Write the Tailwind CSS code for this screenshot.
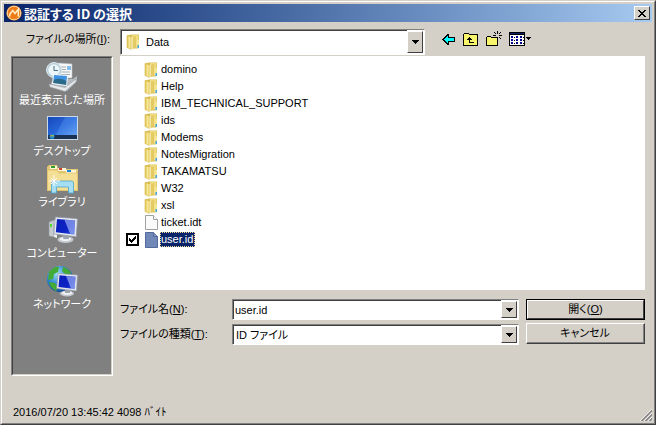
<!DOCTYPE html>
<html lang="ja">
<head>
<meta charset="utf-8">
<meta name="viewport" content="width=device-width, initial-scale=1">
<title>認証する ID の選択</title>
<script src="https://cdn.jsdelivr.net/npm/@tailwindcss/browser@4"></script>
</head>
<body class="min-h-screen bg-[#d4d0c8] text-black text-[11px] leading-[17px] font-['Liberation_Sans','Noto_Sans_CJK_JP',sans-serif] [font-feature-settings:'palt']">

<svg class="absolute size-0" aria-hidden="true">
  <defs>
    <linearGradient id="fold" x1="0" x2="1"><stop offset="0" stop-color="#dfc04a"/><stop offset=".6" stop-color="#f8ea9c"/><stop offset="1" stop-color="#e2c456"/></linearGradient>
    <linearGradient id="screen" x1="0" y1="0" x2="1" y2="1"><stop offset="0" stop-color="#0a1fb8"/><stop offset=".6" stop-color="#0c22c4"/><stop offset="1" stop-color="#2a50e0"/></linearGradient>
    <linearGradient id="desk" x1="0" y1="0" x2="1" y2="1"><stop offset="0" stop-color="#1548b8"/><stop offset=".5" stop-color="#2a68dc"/><stop offset="1" stop-color="#74b0f8"/></linearGradient>
    <radialGradient id="globe" cx=".4" cy=".3" r=".8"><stop offset="0" stop-color="#9fe0fa"/><stop offset=".5" stop-color="#2e86d0"/><stop offset="1" stop-color="#0c3a90"/></radialGradient>
    <symbol id="folder" viewBox="0 0 16 16">
      <path fill="#d8bd55" d="M1 1.500 5 .5h8v13l-1 1H5L1 13.500z"/>
      <path fill="#efdb80" d="M6 1h6.500v12H6z"/>
      <path fill="url(#fold)" stroke="#d6b84a" stroke-width=".6" d="M1 1.500 5.500 3v12.500L1 13.500z"/>
      <path fill="#fffbd8" d="M5.500 3h1.200v12.500H5.500z"/>
      <path fill="#e3ca62" d="M6.700 3 10 2v11.500l-3.300 1.500z"/>
      <path fill="#f4e595" d="M10.500 6h2.500v8h-2.500z"/>
      <path fill="#3fa4dc" d="M11.500 11h1.500v3h-1.500z"/>
    </symbol>
    <symbol id="down" viewBox="0 0 7 4"><path d="M0 0h7v1H6v1H5v1H4v1H3V3H2V2H1V1H0z"/></symbol>
    <symbol id="monitor" viewBox="0 0 22 24">
      <ellipse cx="11" cy="20.500" rx="7" ry="3" fill="#c4c8ce"/><ellipse cx="11" cy="20" rx="5" ry="1.800" fill="#f1f3f5"/>
      <path fill="#9da4ae" d="M9 16h5v4H9z"/>
      <path fill="#e6eaf0" stroke="#9098a6" stroke-width=".7" d="M2 .5 21.500 2 20.500 18 .7 15.500z"/>
      <path fill="url(#screen)" d="m3.500 2.300 16 1.400-.8 12.200-16.200-2z"/>
      <path fill="#b4c6fc" fill-opacity=".6" d="m10 2.900 9.500.8-.8 12.200-3.700-.5z"/>
    </symbol>
  </defs>
</svg>

<div class="flex min-h-screen flex-col border border-l-[#d4d0c8] border-t-[#d4d0c8] border-r-[#404040] border-b-[#404040]">
<div class="flex flex-1 flex-col border border-l-white border-t-white border-r-[#808080] border-b-[#808080] p-[2px]">

  <header class="flex h-[18px] items-center bg-linear-to-r from-[#0a246a] to-[#a6caf0] pr-[2px] pl-[2px]">
    <svg class="size-4 shrink-0" viewBox="0 0 16 16" aria-hidden="true"><circle cx="8" cy="8" r="7.600" fill="#f6a03c"/><circle cx="8" cy="8" r="6.700" fill="#ee7a18" stroke="#ffd9a0" stroke-width=".9"/><path d="M3.800 11.500V9l3-3.500L9 8.500l3.300-4.300v7.300" fill="none" stroke="#fff0c8" stroke-width="1.500"/></svg>
    <h1 class="ml-[2px] flex-1 font-['Noto_Sans_CJK_JP',sans-serif] text-[13px] font-bold text-white">認証する ID の選択</h1>
    <button type="button" aria-label="閉じる" class="flex h-[14px] w-4 items-center justify-center border border-t-white border-l-white border-r-[#404040] border-b-[#404040] bg-[#d4d0c8]">
      <svg class="h-[7px] w-2" viewBox="0 0 8 7" shape-rendering="crispEdges" aria-hidden="true"><path d="M0 0h2v1h1v1h2V1h1V0h2v1H7v1H6v1H5v1h1v1h1v1h1v1H6V6H5V5H3v1H2v1H0V6h1V5h1V4h1V3H2V2H1V1H0z"/></svg>
    </button>
  </header>

  <main class="flex flex-1 flex-col px-[7px] pt-[7px]">
    <div class="flex items-start">
      <label for="place" class="w-[109px] shrink-0 pt-[2px] pr-[10px] text-right">ファイルの場所(<u>I</u>):</label>
      <div class="relative flex h-[26px] w-[305px] border border-t-[#808080] border-l-[#808080] border-r-white border-b-white bg-white">
        <svg class="pointer-events-none absolute top-1 left-[5px] size-4" aria-hidden="true"><use href="#folder"/></svg>
        <select id="place" class="min-w-0 flex-1 appearance-none border-t border-l border-[#404040] bg-white pl-6 outline-none"><option>Data</option></select>
        <span class="pointer-events-none my-px mr-px flex w-4 items-center justify-center border border-t-white border-l-white border-r-[#404040] border-b-[#404040] bg-[#d4d0c8]"><svg class="h-1 w-[7px]" aria-hidden="true"><use href="#down"/></svg></span>
      </div>
      <div class="ml-[17px] flex items-center gap-[7px] pt-[2px]" role="toolbar" aria-label="ナビゲーション">
        <button type="button" aria-label="戻る"><svg class="h-4 w-[14px]" viewBox="0 0 14 16" shape-rendering="crispEdges" aria-hidden="true"><path d="M1 7h1V6h1V5h1V4h1V3h2v3h6v5H7v3H5v-1H4v-1H3v-1H2v-1H1V9H0V8h1z"/><path fill="#00ffff" d="M2 8h1V7h1V6h1V5h1v2h6v3H6v2H5v-1H4v-1H3V9H2z"/></svg></button>
        <button type="button" aria-label="上へ"><svg class="size-4" viewBox="0 0 16 16" shape-rendering="crispEdges" aria-hidden="true"><path d="M.5 14.500v-11l1-1h4l1 1h8v11z" fill="#f7f36a" stroke="#000"/><path d="M6 6h1v1h1v1h1v1H7v2h4v1H6V9H4V8h1V7h1z"/></svg></button>
        <button type="button" aria-label="新しいフォルダー"><svg class="size-4" viewBox="0 0 16 16" shape-rendering="crispEdges" aria-hidden="true"><path d="M.5 14.500v-8l1-1h3l1 1h6v8z" fill="#f7f36a" stroke="#000"/><path d="M11 0h1v3h-1zM11 6h1v3h-1zM7 4h3v1H7zM13 4h3v1h-3zM8 1h1v1H8zM9 2h1v1H9zM14 1h1v1h-1zM13 2h1v1h-1zM13 6h1v1h-1zM14 7h1v1h-1zM9 6h1v1H9z"/></svg></button>
        <button type="button" aria-label="表示"><svg class="h-4 w-[22px]" viewBox="0 0 22 16" shape-rendering="crispEdges" aria-hidden="true"><path d="M0 1h16v14H0z"/><path fill="#0a246a" d="M1 2h14v1H1z"/><path fill="#fff" d="M1 4h14v10H1z"/><path fill="#00008b" d="M2 5h2v2H2zM7 5h2v2H7zM11 5h2v2h-2zM2 8h2v2H2zM7 8h2v2H7zM11 8h2v2h-2zM2 11h2v2H2zM7 11h2v2H7zM11 11h2v2h-2z"/><path d="M5 6h1v1H5zM14 6h1v1h-1zM5 9h1v1H5zM14 9h1v1h-1zM5 12h1v1H5zM14 12h1v1h-1zM17 6h5v1h-1v1h-1v1h-1V8h-1V7h-1z"/></svg></button>
      </div>
    </div>

    <div class="mt-px flex gap-[7px]">
      <nav aria-label="場所" class="w-[102px] shrink-0 border border-t-[#808080] border-l-[#808080] border-r-white border-b-white">
        <div class="flex h-[318px] flex-col gap-[5px] border border-t-[#404040] border-l-[#404040] border-r-[#d4d0c8] border-b-[#d4d0c8] bg-[#808080] pt-[3px] leading-[14px] text-white">
          <a href="#recent" class="flex flex-col items-center whitespace-nowrap">
            <svg class="size-8" viewBox="0 0 32 32" aria-hidden="true"><path fill="#f6f8fa" stroke="#b8bec4" stroke-width=".6" d="m12 2 14 1v14H12z"/><path fill="#86bde8" d="M21 5h4v4h-4z"/><path stroke="#a4acb4" d="M14 6h6M14 8.500h6M14 11h10M14 13.500h10"/><circle cx="8" cy="9" r="7.500" fill="#b6cfda" stroke="#dce8ee"/><circle cx="8" cy="9" r="5.700" fill="#ecf5f8"/><path stroke="#4a6f86" fill="none" d="M8 5v4.500h4"/><path fill="#b6bbc0" d="m5 22 3-4h19l4-3v5L21 30 5 26z"/><path fill="#f5f9fd" d="m7 13 15 1-1 11-15-2z"/><path fill="#3e92e2" d="m8 14 13 1-.5 5L7.500 19z"/><path fill="#2b6b8a" d="M7.600 19q6-3 12.900 1l-.3 4L7 22z"/><path fill="#e7eaec" stroke="#969ca2" stroke-width=".6" d="m3 23 16 3.500L30 18v3l-11 9.500L4 26z"/></svg>
            最近表示した場所</a>
          <a href="#desktop" class="flex flex-col items-center whitespace-nowrap">
            <svg class="size-8" viewBox="0 0 32 32" aria-hidden="true"><path fill="#cbd8e8" d="M1 4h31v24H1z"/><path fill="url(#desk)" d="M2 5h29v22H2z"/><path fill="#5f9df0" fill-opacity=".35" d="M19 5h12v19H9z"/><path fill="#1b3154" d="M2 23h29v4H2z"/><circle cx="6" cy="24.500" r="2.500" fill="#1d87c9"/><path fill="#f28a35" d="M4.500 23H6v1.500H4.500z"/><path fill="#8edb55" d="M6.300 23h1.500v1.500H6.300z"/></svg>
            デスクトップ</a>
          <a href="#library" class="flex flex-col items-center whitespace-nowrap">
            <svg class="size-8" viewBox="0 0 32 32" aria-hidden="true"><path fill="#e3c873" d="M1 4 3 2h8l1 3h7l1 1h12v22H1z"/><path fill="#fff7d7" d="M4 3h7v3H4zM12 5h8v3h-8zM20 7h10v3H20z"/><path fill="#2da32d" d="M5 3h4v2H5z"/><path fill="#d3402a" d="M13 5h3v2h-3z"/><path fill="#1686d8" d="M21 7h4v2h-4z"/><path fill="#f5df94" stroke="#d6b75e" stroke-width=".6" d="M1.500 7H11l2 3h18.500v17.500h-30z"/><path fill="#a6def4" stroke="#4ca5cf" stroke-width=".8" d="M5.500 30V20q0-2 2-2h18q2 0 2 2v10h-5v-6h-12v6z"/><path stroke="#fff" fill="none" d="M8 12v11M3 18h11M5 15l6 6M11 15l-6 6"/></svg>
            ライブラリ</a>
          <a href="#computer" class="flex flex-col items-center whitespace-nowrap">
            <svg class="size-8" viewBox="0 0 32 32" aria-hidden="true"><path fill="#c7cbcf" stroke="#91979d" stroke-width=".6" d="m3 8 5-2v17l-5-1z"/><path fill="#eff1f3" d="m8 6 3 1v17l-3-1z"/><path fill="#50dc2c" d="M4 10h2v3H4z"/><svg x="7" y="2" width="25" height="28"><use href="#monitor"/></svg></svg>
            コンピューター</a>
          <a href="#network" class="flex flex-col items-center whitespace-nowrap">
            <svg class="size-8" viewBox="0 0 32 32" aria-hidden="true"><circle cx="14" cy="14" r="13" fill="url(#globe)"/><path fill="#43ab35" d="M3 7q5-6 10-5l-1 5-4 2-1 5-5 1zM17 2q7 2 8 7l-5 1-4-4zM3 17l6 1 3 5-2 3Q4 23 3 17z"/><svg x="10" y="8" width="22" height="24"><use href="#monitor"/></svg></svg>
            ネットワーク</a>
        </div>
      </nav>

      <div class="flex min-w-0 flex-1 flex-col">
        <ul class="h-[234px] bg-white pt-[5px] pl-[6px]" aria-label="ファイル一覧">
          <li class="flex h-[17px] items-center pl-[18px]"><svg class="mr-[1px] size-4" aria-hidden="true"><use href="#folder"/></svg>domino</li>
          <li class="flex h-[17px] items-center pl-[18px]"><svg class="mr-[1px] size-4" aria-hidden="true"><use href="#folder"/></svg>Help</li>
          <li class="flex h-[17px] items-center pl-[18px]"><svg class="mr-[1px] size-4" aria-hidden="true"><use href="#folder"/></svg>IBM_TECHNICAL_SUPPORT</li>
          <li class="flex h-[17px] items-center pl-[18px]"><svg class="mr-[1px] size-4" aria-hidden="true"><use href="#folder"/></svg>ids</li>
          <li class="flex h-[17px] items-center pl-[18px]"><svg class="mr-[1px] size-4" aria-hidden="true"><use href="#folder"/></svg>Modems</li>
          <li class="flex h-[17px] items-center pl-[18px]"><svg class="mr-[1px] size-4" aria-hidden="true"><use href="#folder"/></svg>NotesMigration</li>
          <li class="flex h-[17px] items-center pl-[18px]"><svg class="mr-[1px] size-4" aria-hidden="true"><use href="#folder"/></svg>TAKAMATSU</li>
          <li class="flex h-[17px] items-center pl-[18px]"><svg class="mr-[1px] size-4" aria-hidden="true"><use href="#folder"/></svg>W32</li>
          <li class="flex h-[17px] items-center pl-[18px]"><svg class="mr-[1px] size-4" aria-hidden="true"><use href="#folder"/></svg>xsl</li>
          <li class="flex h-[17px] items-center pl-[18px]"><svg class="mr-[1px] size-4" viewBox="0 0 16 16" aria-hidden="true"><path d="M1.500.5h8l4 4v10h-12z" fill="#fafafa" stroke="#a0a0a0"/><path d="M9.500.5v4h4" fill="#fff" stroke="#a0a0a0"/></svg>ticket.idt</li>
          <li class="flex h-[17px] items-center">
            <span class="relative mr-[5px] size-[13px]">
              <input id="pick" type="checkbox" checked class="peer block size-[13px] appearance-none border-2 border-black bg-white">
              <svg class="pointer-events-none absolute top-[3px] left-[3px] hidden size-[7px] peer-checked:block" viewBox="0 0 7 7" shape-rendering="crispEdges" aria-hidden="true"><path d="M0 2h1v1h1v1h1V3h1V2h1V1h1V0h1v3H6v1H5v1H4v1H3v1H2V6H1V5H0z"/></svg>
            </span>
            <svg class="size-4" viewBox="0 0 16 16" aria-hidden="true"><path d="M1.500.5h8l4 4v11h-12z" fill="#7088b8" stroke="#53689c"/><path d="M9.500.5v4h4" fill="#8498c4" stroke="#53689c"/></svg>
            <label for="pick" class="h-[15px] border border-dotted border-[#f5db95] bg-[#0a246a] pr-px leading-[13px] text-white">user.id</label>
          </li>
        </ul>

        <div class="mt-[9px] flex gap-[7px]">
          <form class="flex min-w-0 flex-1 flex-col gap-1">
            <div class="flex items-center">
              <label for="name" class="w-28 shrink-0">ファイル名(<u>N</u>):</label>
              <div class="flex h-[21px] min-w-0 flex-1 border border-t-[#808080] border-l-[#808080] border-r-white border-b-white bg-white">
                <input id="name" type="text" value="user.id" class="min-w-0 flex-1 border-t border-l border-[#404040] bg-white pl-px outline-none">
                <button type="button" aria-label="候補を表示" class="my-px mr-px flex w-4 items-center justify-center border border-t-white border-l-white border-r-[#404040] border-b-[#404040] bg-[#d4d0c8]"><svg class="h-1 w-[7px]" aria-hidden="true"><use href="#down"/></svg></button>
              </div>
            </div>
            <div class="flex items-center">
              <label for="kind" class="w-28 shrink-0">ファイルの種類(<u>T</u>):</label>
              <div class="flex h-[21px] min-w-0 flex-1 border border-t-[#808080] border-l-[#808080] border-r-white border-b-white bg-white">
                <select id="kind" class="min-w-0 flex-1 appearance-none border-t border-l border-[#404040] bg-white pl-[2px] outline-none"><option>ID ファイル</option></select>
                <span class="pointer-events-none my-px mr-px flex w-4 items-center justify-center border border-t-white border-l-white border-r-[#404040] border-b-[#404040] bg-[#d4d0c8]"><svg class="h-1 w-[7px]" aria-hidden="true"><use href="#down"/></svg></span>
              </div>
            </div>
          </form>
          <div class="flex w-[119px] shrink-0 flex-col gap-[3px]">
            <button type="button" class="h-[21px] border border-black"><span class="flex h-full items-center justify-center border border-t-white border-l-white border-r-[#404040] border-b-[#404040]"><span>開く(<u>O</u>)</span></span></button>
            <button type="button" class="h-[21px] border border-t-white border-l-white border-r-[#404040] border-b-[#404040]"><span class="flex h-full items-center justify-center border-r border-b border-[#808080]">キャンセル</span></button>
          </div>
        </div>
      </div>
    </div>
  </main>

  <footer class="flex items-end justify-between pl-[9px]">
    <p>2016/07/20 13:45:42 4098 ﾊﾞｲﾄ</p>
    <svg class="size-3" viewBox="0 0 12 12" aria-hidden="true"><path d="M0 12 12 0M4 12l8-8M8 12l4-4" stroke="#fff"/><path d="M1 12.500 12.500 1M5 12.500 12.500 5M9 12.500 12.500 9" stroke="#808080" stroke-width="1.500"/></svg>
  </footer>
</div>
</div>
</body>
</html>
